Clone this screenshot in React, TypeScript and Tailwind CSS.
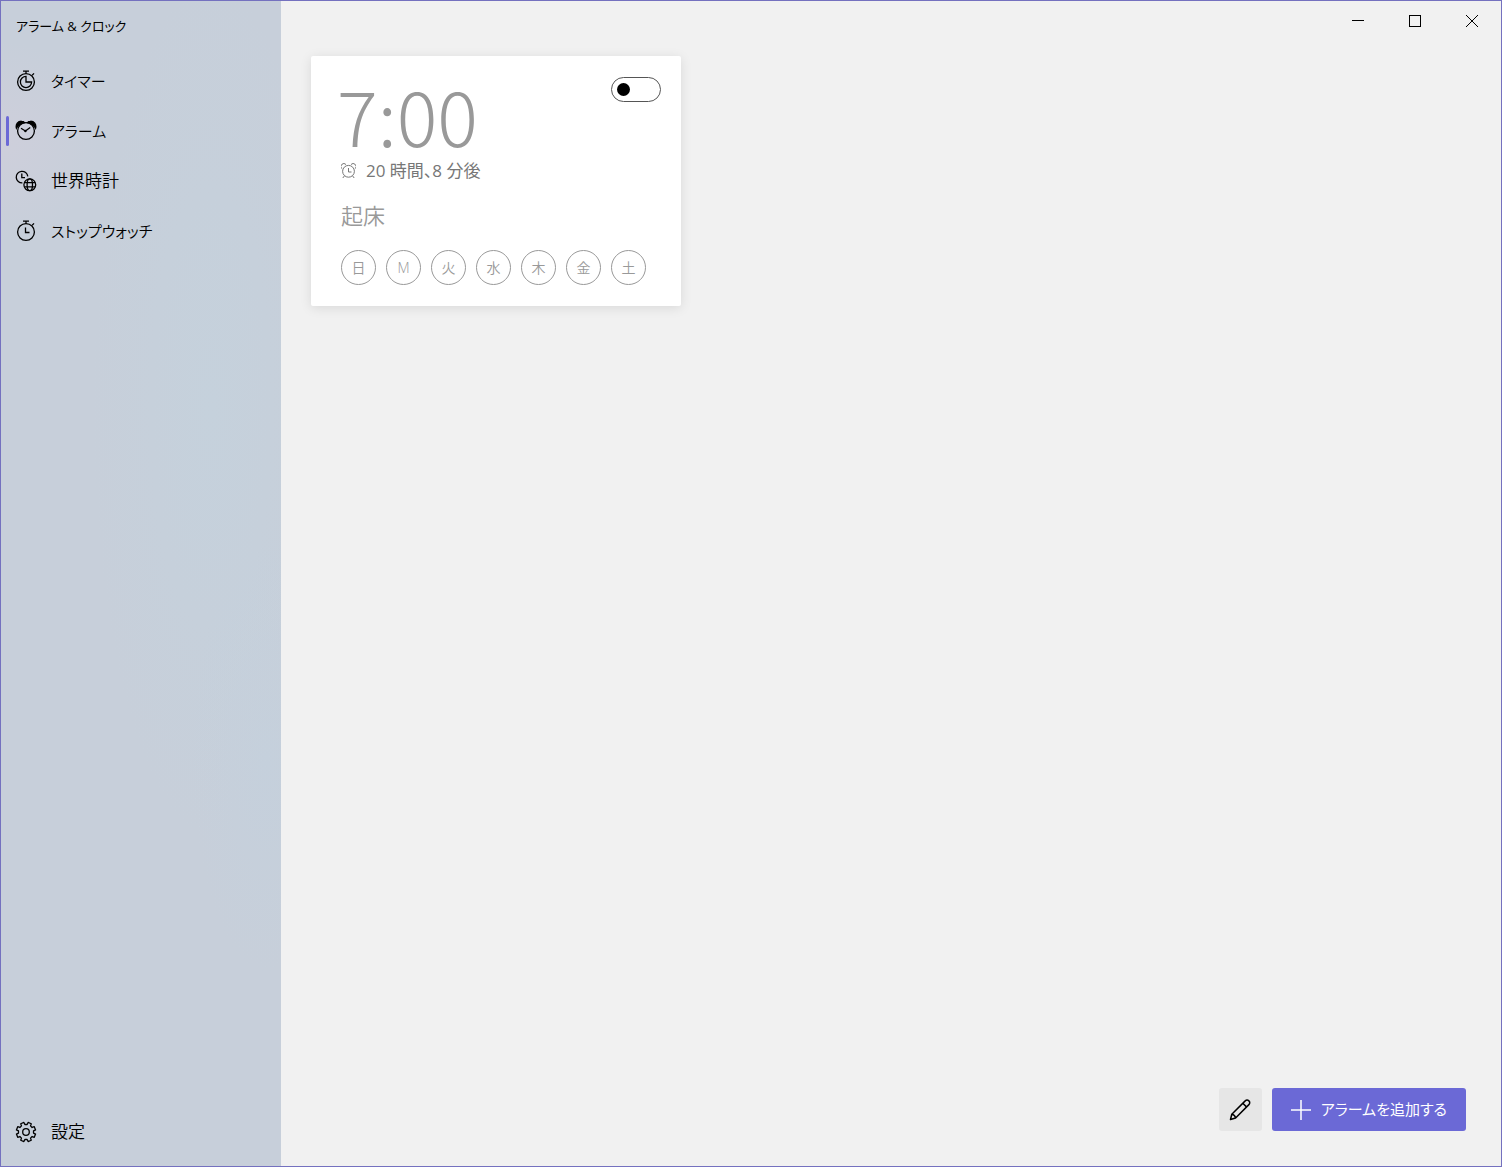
import { useState, type ReactNode } from 'react'

interface NavItem {
  id: string
  label: string
  icon: ReactNode
}

function TimerIcon() {
  return (
    <svg width="22" height="22" viewBox="0 0 22 22" fill="none" stroke="currentColor" strokeWidth="1.3" aria-hidden="true">
      <circle cx="11" cy="12" r="8.400" />
      <path d="M8 1.200h6M11 1.200v2.400M17.200 5.200l1.800-1.800" />
      <path d="M11 6.400a5.600 5.600 0 1 0 5.600 5.600H11z" />
    </svg>
  )
}

function AlarmIcon() {
  return (
    <svg width="22" height="22" viewBox="0 0 22 22" fill="none" stroke="currentColor" strokeWidth="1.3" aria-hidden="true">
      <path d="M1.400 8.200C.4 4.400 3 1 6.600 1.100c1.300 0 2.300 .6 3 1.500C6 3.200 3 5.200 1.400 8.200zM20.600 8.200C21.600 4.400 19 1 15.400 1.100c-1.300 0-2.300 .6-3 1.500C16 3.200 19 5.200 20.600 8.200z" fill="currentColor" />
      <circle cx="11" cy="11" r="8.400" />
      <path d="M6 8.200 10.400 11l4.800-3.600" />
      <circle cx="10.400" cy="11" r="1.200" fill="currentColor" stroke="none" />
    </svg>
  )
}

function WorldClockIcon() {
  return (
    <svg width="22" height="22" viewBox="0 0 22 22" fill="none" stroke="currentColor" strokeWidth="1.300" aria-hidden="true">
      <path d="M7.400 12.900A5.800 5.800 0 1 1 12.800 6.400" />
      <path d="M6.800 3.500v4.200H10" />
      <circle cx="14.800" cy="14.800" r="5.900" />
      <ellipse cx="14.800" cy="14.800" rx="2.700" ry="5.900" />
      <path d="M9.400 12.600h10.800M9.400 16.800h10.800" />
    </svg>
  )
}

function StopwatchIcon() {
  return (
    <svg width="22" height="22" viewBox="0 0 22 22" fill="none" stroke="currentColor" strokeWidth="1.3" aria-hidden="true">
      <circle cx="11" cy="12" r="8.400" />
      <path d="M8 1.200h6M11 1.200v2.400M17.200 5.200l1.800-1.800M10.500 7.500v5h4" />
    </svg>
  )
}

// Engranaje de 8 dientes, con un hueco arriba
function GearIcon() {
  const dientes = 8
  const puntos: string[] = []
  for (let i = 0; i < dientes; i++) {
    const base = ((i + 0.5) * 360) / dientes - 90
    for (const [grados, r] of [[-14, 7.6], [-10, 9.8], [10, 9.8], [14, 7.6]]) {
      const a = ((base + grados) * Math.PI) / 180
      puntos.push(`${(11 + r * Math.cos(a)).toFixed(2)},${(11 + r * Math.sin(a)).toFixed(2)}`)
    }
  }
  return (
    <svg width="22" height="22" viewBox="0 0 22 22" fill="none" stroke="currentColor" strokeWidth="1.3" strokeLinejoin="round" aria-hidden="true">
      <polygon points={puntos.join(' ')} />
      <circle cx="11" cy="11" r="3.300" />
    </svg>
  )
}

function SmallAlarmIcon() {
  return (
    <svg width="15" height="16" viewBox="0 0 15 16" fill="none" stroke="currentColor" strokeWidth="1" aria-hidden="true">
      <circle cx="7.500" cy="8.300" r="5.900" />
      <path d="M.7 5.600A2.600 2.600 0 0 1 5 1.500M14.300 5.600A2.600 2.600 0 0 0 10 1.500M3.500 12.800 1.800 15M11.500 12.800 13.200 15M7.500 5v4H10.500" />
    </svg>
  )
}

function PencilIcon() {
  return (
    <svg width="22" height="22" viewBox="0 0 22 22" fill="none" stroke="currentColor" strokeWidth="1.5" strokeLinejoin="round" aria-hidden="true">
      <path d="M1.500 20.500l1.300-5.300L16.200 1.900a2.500 2.500 0 0 1 3.700 0 2.500 2.500 0 0 1 0 3.700L6.600 19z" />
      <path d="M2.800 15.200c1.800 .3 3.500 2 3.800 3.800M13.800 4.200l3.700 3.700" />
    </svg>
  )
}

const NAV: NavItem[] = [
  { id: 'timer', label: 'タイマー', icon: <TimerIcon /> },
  { id: 'alarm', label: 'アラーム', icon: <AlarmIcon /> },
  { id: 'world', label: '世界時計', icon: <WorldClockIcon /> },
  { id: 'stopwatch', label: 'ストップウォッチ', icon: <StopwatchIcon /> },
]

const DAYS = ['日', 'M', '火', '水', '木', '金', '土']

// El katakana va un poco más chico que el kanji
const esKana = (s: string) => /^[\u30a0-\u30ff]+$/.test(s)

function NavButton({ item, active, onClick }: { item: NavItem; active: boolean; onClick: () => void }) {
  return (
    <button onClick={onClick} className="relative flex h-[50px] w-full items-center gap-3.5 pl-3.5 text-left font-[350]">
      {active && <span className="absolute left-[5px] top-[10px] h-[30px] w-[3px] rounded-full bg-[#6b69d6]" />}
      {item.icon}
      <span className={esKana(item.label) ? 'text-[15px]' : 'text-[17px]'}>{item.label}</span>
    </button>
  )
}

function AlarmCard() {
  const [on, setOn] = useState(false)

  return (
    <article className="flex h-[250px] w-[370px] flex-col rounded-xs bg-white pb-[21px] pl-[30px] pr-5 pt-[21px] text-[#999] shadow-[0_2px_12px_rgba(0,0,0,0.1)]">
      <div className="flex items-start justify-between">
        <time className="-ml-1 h-20 font-['Noto_Sans_CJK_JP',sans-serif] text-[76px] font-light leading-[74px]">7:00</time>
        <input
          type="checkbox"
          role="switch"
          aria-label="起床"
          checked={on}
          onChange={e => setOn(e.target.checked)}
          className="flex h-[25px] w-[50px] appearance-none items-center rounded-full border border-[#555] px-[5px] before:size-[13px] before:rounded-full before:bg-black checked:justify-end checked:bg-[#6b69d6] checked:before:bg-white"
        />
      </div>
      <p className="flex h-7 items-center gap-2.5 text-[17px] text-[#777]">
        <SmallAlarmIcon />
        <span>20 時間、8 分後</span>
      </p>
      <h2 className="mt-3.5 text-[22px] font-[350] leading-8">起床</h2>
      <ul className="mt-auto flex gap-2.5">
        {DAYS.map(d => (
          <li key={d} className="flex size-[35px] items-center justify-center rounded-full border border-[#999] text-sm font-[350]">
            {d}
          </li>
        ))}
      </ul>
    </article>
  )
}

function WindowControls() {
  return (
    <div className="flex h-10 justify-end">
      <button aria-label="最小化" className="flex w-[57px] items-center justify-center">
        <svg width="13" height="13" viewBox="0 0 13 13" stroke="currentColor" shapeRendering="crispEdges"><path d="M0 5.500h12" /></svg>
      </button>
      <button aria-label="最大化" className="flex w-[57px] items-center justify-center">
        <svg width="13" height="13" viewBox="0 0 13 13" fill="none" stroke="currentColor" shapeRendering="crispEdges"><path d="M.5 .5h11v11H.5z" /></svg>
      </button>
      <button aria-label="閉じる" className="flex w-[57px] items-center justify-center">
        <svg width="13" height="13" viewBox="0 0 13 13" stroke="currentColor"><path d="M0 0l12 12M12 0L0 12" /></svg>
      </button>
    </div>
  )
}

export default function App() {
  const [tab, setTab] = useState('alarm')

  return (
    <div className="flex min-h-screen border border-[#7471bf] bg-[#f1f1f1] font-['Open_Sans','Noto_Sans_CJK_JP',sans-serif] text-black [font-feature-settings:'palt']">
      <aside className="flex w-[280px] shrink-0 flex-col bg-[#c7cfda] bg-[radial-gradient(circle_at_0_140px,#cecfdb,transparent_100px),radial-gradient(ellipse_at_75%_35%,#c5d1dc,transparent_40%),radial-gradient(ellipse_at_95%_65%,#c5d0dc,transparent_20%)] pb-[9px]">
        <h1 className="flex h-[51px] items-center pl-[15px] text-[13px]">アラーム &amp; クロック</h1>
        <nav className="mt-1 flex flex-1 flex-col">
          {NAV.map(item => (
            <NavButton key={item.id} item={item} active={tab === item.id} onClick={() => setTab(item.id)} />
          ))}
          <div className="mt-auto">
            <NavButton
              item={{ id: 'settings', label: '設定', icon: <GearIcon /> }}
              active={tab === 'settings'}
              onClick={() => setTab('settings')}
            />
          </div>
        </nav>
      </aside>

      <div className="flex flex-1 flex-col">
        <WindowControls />
        <main className="flex-1 px-[30px] pt-[15px]">
          <AlarmCard />
        </main>
        <footer className="flex justify-end gap-2.5 p-[35px]">
          <button aria-label="編集" className="flex size-[43px] items-center justify-center rounded-[3px] bg-[#e6e6e6]">
            <PencilIcon />
          </button>
          <button className="flex h-[43px] items-center gap-2.5 rounded-[3px] bg-[#6b69d6] px-[19px] text-[15px] text-white">
            <svg width="20" height="20" viewBox="0 0 20 20" stroke="currentColor" strokeWidth="1.500" aria-hidden="true"><path d="M10 0v20M0 10h20" /></svg>
            アラームを追加する
          </button>
        </footer>
      </div>
    </div>
  )
}
